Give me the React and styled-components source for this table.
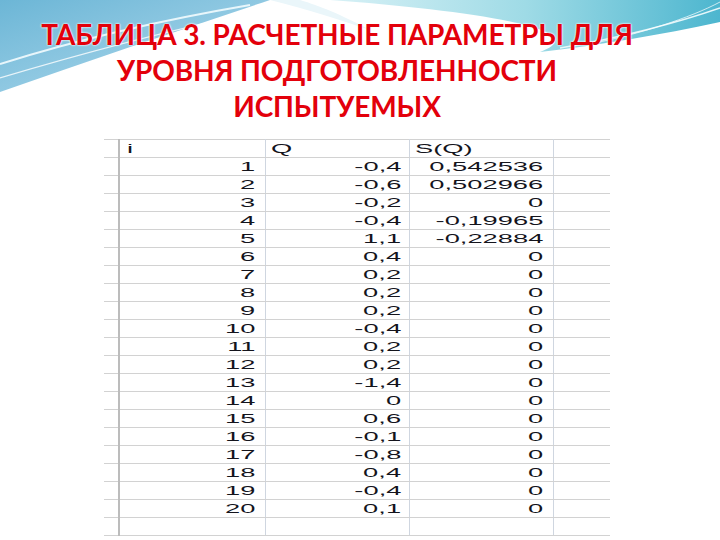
import React from "react";
import styled, { createGlobalStyle } from "styled-components";

const Global = createGlobalStyle`
  html, body { margin: 0; padding: 0; background: #fff; }
`;

const Page = styled.div`
  position: relative;
  width: 720px;
  height: 540px;
  overflow: hidden;
  background: #fff;
  font-family: "Liberation Sans", Arial, sans-serif;
`;

const Backdrop = styled.svg`
  position: absolute;
  left: 0;
  top: 0;
  width: 720px;
  height: 140px;
`;

const Content = styled.div`
  position: relative;
  display: flex;
  flex-direction: column;
  align-items: flex-start;
`;

const Title = styled.h1`
  box-sizing: border-box;
  width: 674px;
  margin: 0;
  padding-top: 16px;
  font-family: Lato, "Open Sans", sans-serif;
  font-weight: 700;
  font-size: 28px;
  line-height: 36px;
  letter-spacing: -0.1px;
  text-align: center;
  color: #e3000b;
  text-shadow: 0 0 2px #fff, 0 0 2px #fff;
`;

const Sheet = styled.table`
  margin: 15px 0 0 104px;
  border-collapse: collapse;
  table-layout: fixed;
`;

const Cell = styled.td`
  box-sizing: border-box;
  width: ${(p) => p.$w}px;
  height: 18px;
  padding: 0 ${(p) => p.$pad || 0}px;
  border-top: 1px solid #d2d2d2;
  border-bottom: 1px solid #d2d2d2;
  border-right: ${(p) => (p.$thick ? "2px solid #bcbcbc" : p.$last ? "none" : "1px solid #cfd6e0")};
  text-align: ${(p) => p.$align || "right"};
  vertical-align: middle;
  white-space: nowrap;
  overflow: visible;
  color: #14141c;
  font-size: 13px;
  line-height: 16px;
`;

const Num = styled.span`
  display: inline-block;
  transform: scaleX(2.1);
  transform-origin: ${(p) => (p.$left ? "left" : "right")} center;
`;

const rows = [
  ["-0,4", "0,542536"],
  ["-0,6", "0,502966"],
  ["-0,2", "0"],
  ["-0,4", "-0,19965"],
  ["1,1", "-0,22884"],
  ["0,4", "0"],
  ["0,2", "0"],
  ["0,2", "0"],
  ["0,2", "0"],
  ["-0,4", "0"],
  ["0,2", "0"],
  ["0,2", "0"],
  ["-1,4", "0"],
  ["0", "0"],
  ["0,6", "0"],
  ["-0,1", "0"],
  ["-0,8", "0"],
  ["0,4", "0"],
  ["-0,4", "0"],
  ["0,1", "0"],
];

function Row({ cells, header }) {
  return (
    <tr>
      <Cell $w={15} $thick />
      {cells.map((c, i) => (
        <Cell key={i} $w={i === 0 ? 146 : 144} $pad={header ? (i === 0 ? 7 : 5) : i === 1 ? 7 : 9} $align={header ? "left" : "right"}>
          {c !== "" && <Num $left={header}>{c}</Num>}
        </Cell>
      ))}
      <Cell $w={57} $last />
    </tr>
  );
}

export default function App() {
  return (
    <Page>
      <Global />
      <Backdrop viewBox="0 0 720 140">
        <defs>
          <linearGradient id="lb" x1="0" y1="0" x2="1" y2="1">
            <stop offset="0" stopColor="#6cb6d6" />
            <stop offset="1" stopColor="#b3dbee" />
          </linearGradient>
          <linearGradient id="rb" x1="0" y1="0" x2="1" y2="0">
            <stop offset="0" stopColor="#d8f1f6" />
            <stop offset="0.5" stopColor="#9fdbe6" />
            <stop offset="1" stopColor="#4db6cf" />
          </linearGradient>
        </defs>
        <path d="M0 0 H270 C180 30 90 60 0 92 Z" fill="url(#lb)" />
        <path d="M0 64 C70 42 150 22 250 5" stroke="#e8f6fb" strokeWidth="2" fill="none" />
        <path d="M0 78 C80 54 170 30 265 10" stroke="#ffffff" strokeWidth="1.2" fill="none" opacity="0.8" />
        <path d="M330 0 H720 V22 C660 35 600 45 540 52 C600 30 470 10 330 0 Z" fill="url(#rb)" />
        <path d="M560 48 C620 38 680 22 720 8" stroke="#e6f7fa" strokeWidth="1.5" fill="none" />
        <path d="M590 44 C640 34 690 18 720 2" stroke="#ffffff" strokeWidth="1" fill="none" opacity="0.7" />
        <path d="M270 0 C310 10 340 20 370 30 C340 14 320 6 300 0 Z" fill="#eaf6fa" />
      </Backdrop>
      <Content>
        <Title>
          ТАБЛИЦА 3. РАСЧЕТНЫЕ ПАРАМЕТРЫ ДЛЯ
          <br />
          УРОВНЯ ПОДГОТОВЛЕННОСТИ
          <br />
          ИСПЫТУЕМЫХ
        </Title>
        <Sheet>
          <tbody>
            <Row header cells={["i", "Q", "S(Q)"]} />
            {rows.map((r, i) => (
              <Row key={i} cells={[String(i + 1), r[0], r[1]]} />
            ))}
            <Row cells={["", "", ""]} />
          </tbody>
        </Sheet>
      </Content>
    </Page>
  );
}
